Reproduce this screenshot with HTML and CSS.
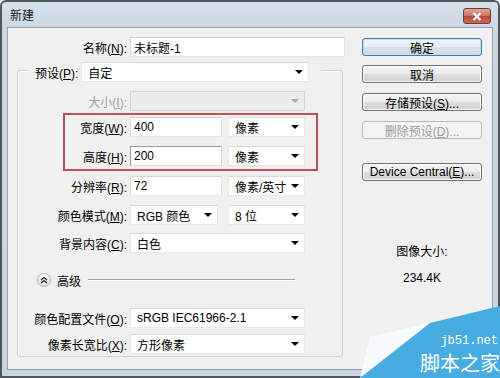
FILE: index.html
```html
<!DOCTYPE html>
<html lang="zh-CN">
<head>
  <meta charset="UTF-8">
  <title>新建</title>
  <link rel="stylesheet" href="styles.css">
</head>
<body>
  <div class="window">
    <div class="titlebar">
      <span class="title">新建</span>
      <span class="close-btn">
        <svg width="12" height="9" viewBox="0 0 12 9"><path d="M2.5 1 L9.5 8 M9.5 1 L2.5 8" stroke="#fff" stroke-width="2.2"/></svg>
      </span>
    </div>

    <div class="dialog">
      <div class="main">
        <div class="row">
          <span class="label name-label">名称(<u>N</u>):</span>
          <div class="input name-input">未标题-1</div>
        </div>

        <div class="group">
          <div class="row legend-row">
            <span class="legend-label">预设(<u>P</u>):</span>
            <div class="select preset-select">自定<i class="arrow"></i></div>
          </div>

          <div class="row row-size">
            <span class="label muted">大小(<u>I</u>):</span>
            <div class="select select-wide disabled"><i class="arrow"></i></div>
          </div>

          <div class="mark">
            <div class="row">
              <span class="label">宽度(<u>W</u>):</span>
              <div class="input num-input">400</div>
              <div class="select unit-select">像素<i class="arrow"></i></div>
            </div>
            <div class="row row-h">
              <span class="label">高度(<u>H</u>):</span>
              <div class="input num-input focused">200</div>
              <div class="select unit-select">像素<i class="arrow"></i></div>
            </div>
          </div>

          <div class="row row-res">
            <span class="label">分辨率(<u>R</u>):</span>
            <div class="input num-input">72</div>
            <div class="select unit-select">像素/英寸<i class="arrow"></i></div>
          </div>

          <div class="row row-mode">
            <span class="label">颜色模式(<u>M</u>):</span>
            <div class="select mode-select">RGB 颜色<i class="arrow"></i></div>
            <div class="select unit-select">8 位<i class="arrow"></i></div>
          </div>

          <div class="row row-bg">
            <span class="label">背景内容(<u>C</u>):</span>
            <div class="select select-wide">白色<i class="arrow"></i></div>
          </div>

          <div class="advanced">
            <span class="toggle">
              <svg width="8" height="8" viewBox="0 0 8 8"><path d="M1 4 L4 1.5 L7 4 M1 7 L4 4.5 L7 7" fill="none" stroke="#222" stroke-width="1.3"/></svg>
            </span>
            <span class="adv-text">高级</span>
            <span class="adv-line"></span>
          </div>

          <div class="row row-profile">
            <span class="label">颜色配置文件(<u>O</u>):</span>
            <div class="select select-wide">sRGB IEC61966-2.1<i class="arrow"></i></div>
          </div>

          <div class="row row-ratio">
            <span class="label">像素长宽比(<u>X</u>):</span>
            <div class="select select-wide">方形像素<i class="arrow"></i></div>
          </div>
        </div>
      </div>

      <div class="side">
        <button class="btn default">确定</button>
        <button class="btn">取消</button>
        <button class="btn">存储预设(<u>S</u>)...</button>
        <button class="btn" disabled>删除预设(<u>D</u>)...</button>
        <button class="btn btn-device">Device Central(<u>E</u>)...</button>
        <div class="info-label">图像大小:</div>
        <div class="info-value">234.4K</div>
      </div>
    </div>

    <div class="watermark">
      <svg width="140" height="72" viewBox="0 0 140 72">
        <polygon points="10,31 70,17 0,72" fill="#f7fbfd"/>
        <polygon points="140,0 140,72 0,72 70,17" fill="#47ade0"/>
      </svg>
      <span class="wm-site">jb51.net</span>
      <span class="wm-name">脚本之家</span>
    </div>
  </div>
</body>
</html>
```

FILE: styles.css
```css
* {
  box-sizing: border-box;
}

html, body {
  margin: 0;
  padding: 0;
}

body {
  font-family: "Liberation Sans", "Noto Sans CJK SC", sans-serif;
  font-size: 12px;
  color: #000;
  background: #fff;
}

u {
  text-decoration: underline;
  text-underline-offset: 1px;
}

.window {
  position: relative;
  width: 500px;
  height: 378px;
  display: flex;
  flex-direction: column;
  border: 2px solid #51565c;
  border-radius: 6px 6px 0 0;
  background: linear-gradient(to bottom, #d6e0ea, #cbd7e4 30px, #c9d6e3);
}

.titlebar {
  height: 25px;
  display: flex;
  align-items: flex-start;
  justify-content: space-between;
  padding: 0 7px 0 8px;
}

.title {
  margin-top: 8px;
  line-height: 12px;
  color: #1a1a1a;
}

.close-btn {
  margin-top: 6px;
  width: 28px;
  height: 16px;
  display: flex;
  align-items: center;
  justify-content: center;
  border: 1px solid #6e3a33;
  border-radius: 3px;
  background: linear-gradient(to bottom, #e3a89c, #c9705f 50%, #b8493a 51%, #c86a56);
}

.dialog {
  flex: 1;
  display: flex;
  align-items: flex-start;
  margin: 0 5px 6px 5px;
  background: #f0f0f0;
  border: 1px solid #98a3ae;
}

.main {
  width: 337px;
  padding-top: 9px;
}

.row {
  display: flex;
  align-items: center;
}

.label {
  width: 109px;
  margin-right: 3px;
  text-align: right;
  white-space: nowrap;
}

.name-label {
  width: 119px;
}

.muted {
  color: #a0a0a0;
}

.input, .select {
  height: 20px;
  display: flex;
  align-items: center;
  background: #fff;
  white-space: nowrap;
}

.input {
  padding-left: 3px;
  border: 1px solid #e6e6e6;
  border-top-color: #d2d2d2;
  border-left-color: #dcdcdc;
}

.input.focused {
  border-color: #9a9a9a #dcdcdc #dcdcdc #9a9a9a;
}

.select {
  padding-left: 6px;
  border: 1px solid #e8e8e8;
  border-top-color: #dadada;
}

.select.disabled {
  background: #ececec;
  border-color: #d6d6d6;
}

.arrow {
  margin-left: auto;
  margin-right: 5px;
  width: 0;
  height: 0;
  border-left: 4px solid transparent;
  border-right: 4px solid transparent;
  border-top: 4px solid #000;
}

.disabled .arrow {
  border-top-color: #a8a8a8;
}

.name-input {
  width: 215px;
}

.group {
  width: 326px;
  margin: 13px 0 0 9px;
  padding-bottom: 2px;
  border: 1px solid #cfd4d9;
  border-radius: 3px;
  box-shadow: inset 1px 1px 0 #fff;
}

.legend-row {
  width: 294px;
  margin: -9px 0 0 9px;
  padding: 0 5px 0 8px;
  background: #f0f0f0;
}

.legend-label {
  margin-right: 3px;
}

.preset-select {
  width: 228px;
}

.row-size {
  margin-top: 9px;
}

.select-wide {
  width: 175px;
}

.mark {
  width: 255px;
  margin: 2px 0 0 45px;
  padding: 2px 0 3px;
  border: 2px solid #b9525d;
}

.mark .label {
  width: 62px;
}

.row-h {
  margin-top: 9px;
}

.num-input {
  width: 92px;
}

.unit-select {
  width: 77px;
  margin-left: 6px;
}

.mode-select {
  width: 88px;
}

.mode-select + .unit-select {
  margin-left: 10px;
}

.row-res {
  margin-top: 5px;
}

.row-mode {
  margin-top: 9px;
}

.row-bg {
  margin-top: 8px;
}

.advanced {
  width: 258px;
  height: 14px;
  margin: 20px 0 0 19px;
  display: flex;
  align-items: center;
}

.toggle {
  width: 14px;
  height: 14px;
  display: flex;
  align-items: center;
  justify-content: center;
  border: 1px solid #b4b4b4;
  border-radius: 50%;
  background: linear-gradient(to bottom, #fdfdfd, #e4e4e4);
}

.adv-text {
  margin-left: 6px;
}

.adv-line {
  flex: 1;
  margin-left: 7px;
  height: 2px;
  border-top: 1px solid #a5a5a5;
  border-bottom: 1px solid #fff;
}

.row-profile {
  margin-top: 21px;
}

.row-ratio {
  margin-top: 6px;
}

.side {
  width: 120px;
  margin-left: 17px;
  padding-top: 10px;
  display: flex;
  flex-direction: column;
  align-items: stretch;
}

.btn {
  height: 18px;
  margin-bottom: 10px;
  padding: 0;
  font: inherit;
  color: #000;
  border: 1px solid #707070;
  border-radius: 3px;
  background: linear-gradient(to bottom, #f4f4f4, #ececec 50%, #dedede 51%, #d2d2d2);
  box-shadow: inset 0 0 0 1px #fbfbfb;
}

.btn.default {
  margin-bottom: 9px;
  border-color: #3c7fb1;
  background: linear-gradient(to bottom, #f2f6f9, #e6edf3 50%, #d8e2ea 51%, #cfd9e2);
  box-shadow: inset 0 0 0 1px #bfe0f4;
}

.btn:disabled {
  color: #9a9a9a;
  border-color: #b8bcbf;
  background: #f4f4f4;
  box-shadow: none;
}

.btn-device {
  margin-top: 14px;
}

.info-label {
  margin-top: 53px;
  line-height: 16px;
  text-align: center;
}

.info-value {
  margin-top: 10px;
  line-height: 16px;
  text-align: center;
}

/* site watermark over the bottom-right corner of the window */
.watermark {
  position: absolute;
  right: -2px;
  bottom: -2px;
  width: 140px;
  height: 72px;
}

.watermark svg {
  display: block;
}

.wm-site {
  position: absolute;
  right: 2px;
  top: 28px;
  font-family: "Liberation Mono", monospace;
  font-size: 12px;
  line-height: 14px;
  color: #fff;
}

.wm-name {
  position: absolute;
  right: 0;
  top: 47px;
  font-family: "Noto Sans CJK SC", sans-serif;
  font-size: 20px;
  line-height: 20px;
  color: #fff;
}
```
